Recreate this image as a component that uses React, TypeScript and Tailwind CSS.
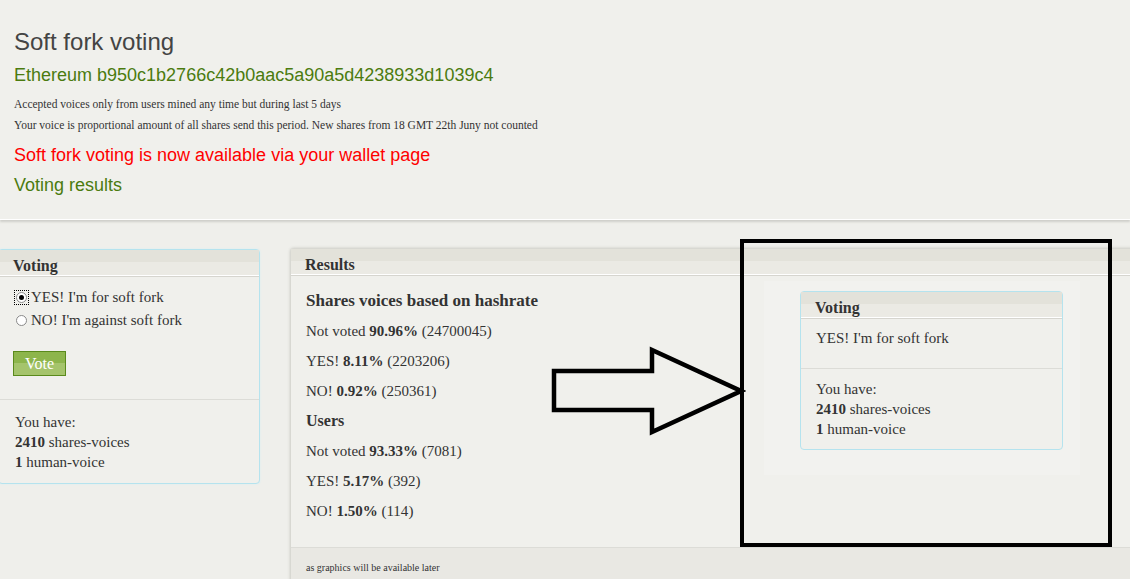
import React from "react";

const serif = "font-['Liberation_Serif',Georgia,serif]";
const sans = "font-['Liberation_Sans',Arial,sans-serif]";

function PanelHead({ title }: { title: string }) {
  return (
    <div className="h-[26px] border-b border-white shadow-[0_1px_0_#d6d5cf] bg-[linear-gradient(#e3e2da_0,#e3e2da_12px,#ebeae4_12px,#ebeae4_100%)] pl-[14px] pt-[6px]">
      <h3 className="text-[16px] leading-[20px] font-bold text-[#333]">{title}</h3>
    </div>
  );
}

function Radio({ checked }: { checked?: boolean }) {
  return (
    <span
      className={`inline-flex items-center justify-center w-[13px] h-[13px] mr-[3px] ${
        checked ? "outline outline-1 outline-dotted outline-black" : ""
      }`}
    >
      <span className="flex items-center justify-center w-[11px] h-[11px] rounded-full border border-[#8a8a8a] bg-white">
        {checked && <span className="w-[5px] h-[5px] rounded-full bg-black" />}
      </span>
    </span>
  );
}

function YouHave() {
  return (
    <div className="leading-[20px]">
      <div>You have:</div>
      <div>
        <b>2410</b> shares-voices
      </div>
      <div>
        <b>1</b> human-voice
      </div>
    </div>
  );
}

function Row({ label, pct, count }: { label: string; pct: string; count: string }) {
  return (
    <p className="h-[30px] leading-[30px]">
      {label} <b>{pct}</b> ({count})
    </p>
  );
}

export default function App() {
  return (
    <div className={`relative w-[1130px] h-[579px] overflow-hidden bg-[#efefeb] text-[#333] ${serif}`}>
      <header className="h-[220px] bg-[#f0f0ec] border-b border-white shadow-[0_2px_2px_#cfcfca] px-[14px] pt-[28px]">
        <h1 className={`${sans} text-[24px] leading-[28px] text-[#444]`}>Soft fork voting</h1>
        <h2 className={`${sans} text-[18px] leading-[22px] text-[#4b7b0f] mt-[8px]`}>
          Ethereum b950c1b2766c42b0aac5a90a5d4238933d1039c4
        </h2>
        <div className="mt-[8px] text-[11.5px] leading-[21px] text-[#333]">
          <p>Accepted voices only from users mined any time but during last 5 days</p>
          <p>Your voice is proportional amount of all shares send this period. New shares from 18 GMT 22th Juny not counted</p>
        </div>
        <p className={`${sans} text-[18px] leading-[22px] text-[#ff0000] mt-[8px]`}>
          Soft fork voting is now available via your wallet page
        </p>
        <p className={`${sans} text-[18px] leading-[22px] text-[#4b7b0f] mt-[8px]`}>Voting results</p>
      </header>

      <main className="flex items-start gap-[30px] mt-[29px] text-[15px]">
        <section className="w-[262px] ml-[-2px] h-[235px] rounded-[4px] border border-[#b5e3ee] bg-[#f0f0ec] shadow-[0_0_2px_#d4eef4]">
          <PanelHead title="Voting" />
          <div className="pl-[16px] pt-[10px] h-[124px] border-b border-[#dcdcd7]">
            <label className="flex items-center h-[23px]">
              <Radio checked />
              YES! I'm for soft fork
            </label>
            <label className="flex items-center h-[23px]">
              <Radio />
              NO! I'm against soft fork
            </label>
            <button className="mt-[19px] ml-[-2px] w-[53px] h-[25px] border border-[#5a8a1c] bg-[linear-gradient(#8db54c_0,#8db54c_50%,#a5c46c_50%,#a5c46c_100%)] text-white text-[16px] leading-[21px]">
              Vote
            </button>
          </div>
          <div className="pl-[16px] pt-[12px]">
            <YouHave />
          </div>
        </section>

        <section className="flex-1 h-[345px] mt-[-1px] mr-[-10px] rounded-[4px] border border-[#d8d8d2] bg-[#f0f0ec] shadow-[0_0_3px_#c8c8c2] flex flex-col">
          <PanelHead title="Results" />
          <div className="h-[273px] shrink-0 pl-[15px] pt-[11px] border-b border-[#dcdcd7]">
            <h4 className="h-[30px] leading-[30px] font-bold text-[17px]">Shares voices based on hashrate</h4>
            <Row label="Not voted" pct="90.96%" count="24700045" />
            <Row label="YES!" pct="8.11%" count="2203206" />
            <Row label="NO!" pct="0.92%" count="250361" />
            <h4 className="h-[30px] leading-[30px] font-bold text-[16px]">Users</h4>
            <Row label="Not voted" pct="93.33%" count="7081" />
            <Row label="YES!" pct="5.17%" count="392" />
            <Row label="NO!" pct="1.50%" count="114" />
          </div>
          <div className="flex-1 bg-[#e9e8e3] pl-[15px] pt-[13px] text-[10px] leading-[14px]">
            as graphics will be available later
          </div>
        </section>
      </main>

      {/* annotation overlay: arrow + framed preview */}
      <svg className="absolute left-[550px] top-[346px]" width="196" height="92" viewBox="0 0 196 92">
        <polygon
          points="4,25 102,25 102,4 191,45 102,86 102,64 4,64"
          fill="#f0f0ec"
          stroke="#000"
          strokeWidth="4.5"
          strokeLinejoin="miter"
        />
      </svg>
      <div className="absolute left-[740px] top-[239px] w-[372px] h-[308px] border-[4px] border-black">
        <div className="mt-[38px] ml-[20px] w-[316px] h-[194px] bg-[#f2f2ef] pt-[10px] pl-[36px]">
          <div className="w-[263px] h-[159px] rounded-[4px] border border-[#b5e3ee] bg-[#f0f0ec] text-[15px]">
            <PanelHead title="Voting" />
            <div className="pl-[15px] pt-[9px] h-[51px] border-b border-[#dcdcd7] leading-[22px]">
              YES! I'm for soft fork
            </div>
            <div className="pl-[15px] pt-[10px]">
              <YouHave />
            </div>
          </div>
        </div>
      </div>
    </div>
  );
}
